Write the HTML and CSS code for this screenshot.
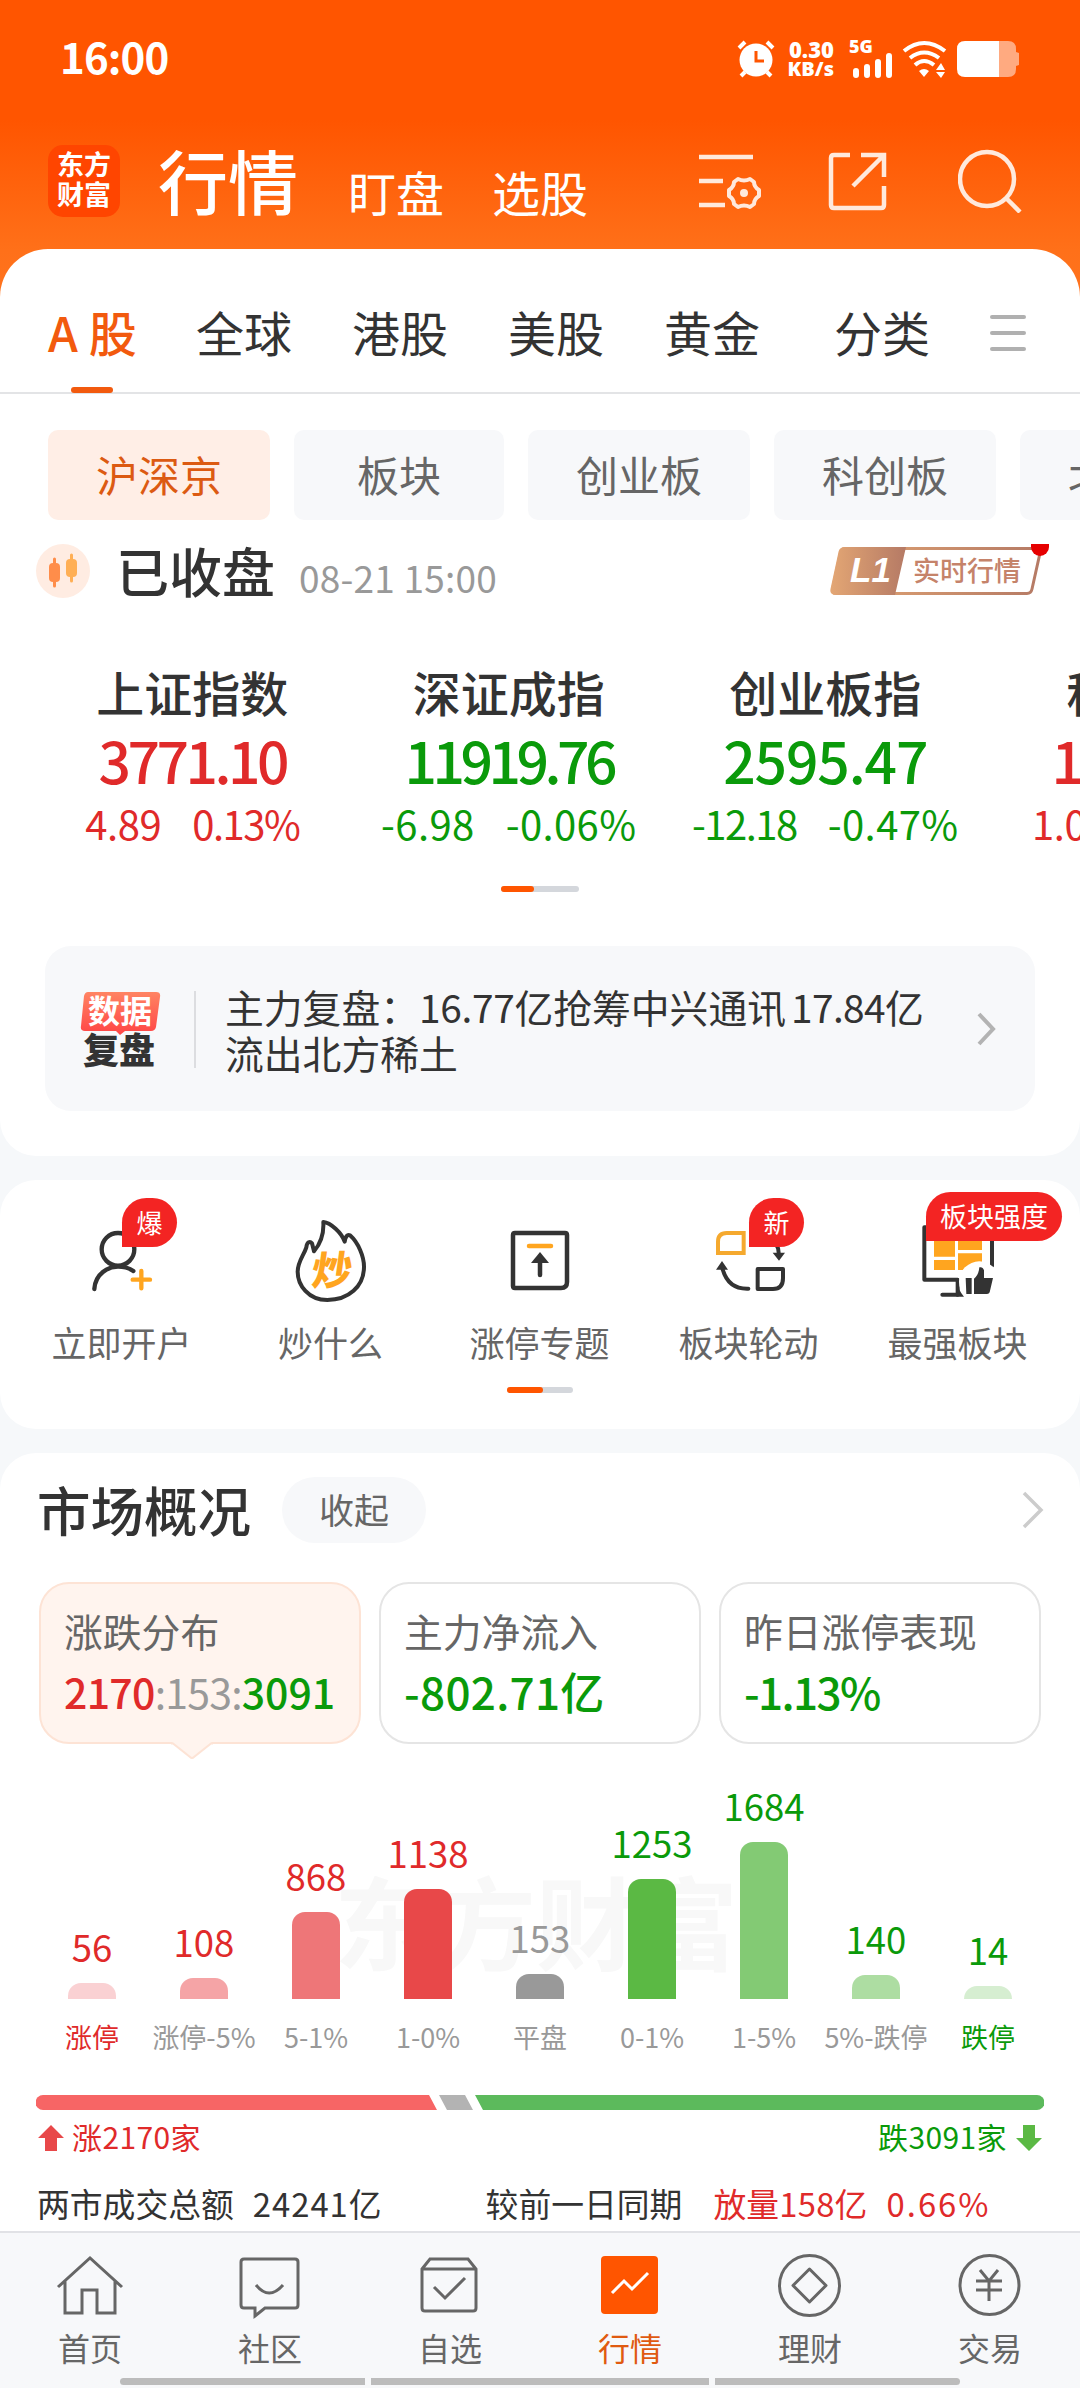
FILE: index.html
```html
<!DOCTYPE html>
<html lang="zh-CN">

<head>
    <meta charset="UTF-8">
    <meta name="viewport" content="width=device-width, initial-scale=1.0">
    <title>行情</title>
    <link rel="stylesheet" href="styles.css">
</head>

<body>
    <div class="status-bar">
        <span class="time">16:00</span>
        <div class="status-icons">
            <svg class="alarm" width="38" height="38" viewBox="0 0 38 38" fill="none" stroke="#fff">
                <circle cx="19" cy="20" r="16.5" fill="#fff" stroke="none"/>
                <path d="M2 8 L8 2 M30 2 L36 8 M8 32 L4 36 M30 32 L34 36" stroke-width="4"/>
                <path d="M19 11 V21 H27" stroke="#ff5500" stroke-width="3"/>
            </svg>
            <div class="speed"><b>0.30</b><b>KB/s</b></div>
            <div class="signal">
                <b>5G</b>
                <svg width="42" height="26" viewBox="0 0 42 26" stroke="#fff" stroke-width="6" stroke-linecap="round">
                    <path d="M5 19 V23 M16 15 V23 M27 10 V23 M38 4 V23"/>
                </svg>
            </div>
            <svg class="wifi" width="46" height="38" viewBox="0 0 46 38" fill="none" stroke="#fff" stroke-width="4">
                <path d="M2 11 Q22 -5 43 11"/>
                <path d="M8 18 Q22 7 37 18"/>
                <path d="M13 25 Q22 17 32 25"/>
                <path d="M17 31 Q22 27 27 31 L22 37 Z M34 30 L39 23 L43 30 Z M34 32 L39 38 L43 32 Z" fill="#fff" stroke="none"/>
            </svg>
            <svg class="battery" width="64" height="38" viewBox="0 0 64 38">
                <path d="M43 1 H52 Q60 1 60 9 V12 L63 13 V25 L60 26 V29 Q60 37 52 37 H43 Z" fill="#ffaa80"/>
                <path d="M43 1 H9 Q1 1 1 9 V29 Q1 37 9 37 H43 Z" fill="#fff"/>
            </svg>
        </div>
    </div>

    <header class="nav">
        <div class="logo"><span>东方</span><span>财富</span></div>
        <h1>行情</h1>
        <a class="nav-link">盯盘</a>
        <a class="nav-link">选股</a>
        <div class="nav-icons">
            <svg width="64" height="64" viewBox="0 0 64 64" fill="none" stroke="#ffe9dc" stroke-width="4.5">
                <path d="M1 8 H55 M1 32 H25 M1 56 H27"/>
                <path d="M40 30 Q46 33 52 30 L56 33 Q56 38 61 41 V47 Q56 50 56 55 L52 58 Q46 55 40 58 L36 55 Q36 50 31 47 V41 Q36 38 36 33 Z" stroke-width="4" stroke-linejoin="round"/>
                <circle cx="46" cy="44" r="4" fill="#ffe9dc" stroke="none"/>
            </svg>
            <svg width="64" height="64" viewBox="0 0 64 64" fill="none" stroke="#ffe9dc" stroke-width="4.5">
                <path d="M25 6 H9 Q6 6 6 9 V56 Q6 59 9 59 H56 Q59 59 59 56 V37"/>
                <path d="M36 6 H59 V28 M58 7 L28 37"/>
            </svg>
            <svg width="64" height="64" viewBox="0 0 64 64" fill="none" stroke="#ffe9dc" stroke-width="4.5">
                <circle cx="29" cy="30" r="27"/>
                <path d="M48 49 L62 63"/>
            </svg>
        </div>
    </header>

    <section class="panel quotes">
        <div class="tabs">
            <a class="active">A 股</a>
            <a>全球</a>
            <a>港股</a>
            <a>美股</a>
            <a>黄金</a>
            <a class="last">分类</a>
            <div class="menu"><i></i><i></i><i></i></div>
        </div>

        <div class="chips">
            <a class="active">沪深京</a>
            <a class="short">板块</a>
            <a>创业板</a>
            <a>科创板</a>
            <a>北交所</a>
        </div>

        <div class="market-status">
            <svg width="54" height="54" viewBox="0 0 54 54">
                <circle cx="27" cy="27" r="27" fill="#ffece2"/>
                <path d="M18.500 15 V42" stroke="#ff8d4a" stroke-width="3" stroke-linecap="round"/>
                <rect x="13" y="19" width="11" height="19" rx="4" fill="#ff8d4a"/>
                <path d="M35.500 11 V37" stroke="#ffaf55" stroke-width="3" stroke-linecap="round"/>
                <rect x="30" y="15" width="11" height="18" rx="4" fill="#ffaf55"/>
            </svg>
            <strong>已收盘</strong>
            <time>08-21 15:00</time>
            <svg class="level" width="222" height="54" viewBox="0 0 222 54">
                <defs>
                    <linearGradient id="gold" x1="0" x2="1" y1="0" y2="0">
                        <stop offset="0" stop-color="#e3a674"/>
                        <stop offset="1" stop-color="#b57a65"/>
                    </linearGradient>
                </defs>
                <path d="M15 4.500 H211 L202 45 Q201 49.500 197 49.500 H6 Q1 49.500 2 45 L10 8 Q11 4.500 15 4.500 Z" fill="#fff" stroke="url(#gold)" stroke-width="3"/>
                <path d="M15 3 H76 L65 51 H6 Q0 51 1 45 L9 8 Q10 3 15 3 Z" fill="url(#gold)"/>
                <text class="level-no" x="20" y="38">L1</text>
                <text class="level-text" x="83" y="37">实时行情</text>
                <path d="M201 0 H219 V3 A9 9 0 0 1 201 3 Z" fill="#e60000"/>
            </svg>
        </div>

        <div class="indexes">
            <div class="index up">
                <h3>上证指数</h3>
                <b class="mid">3771.10</b>
                <p><span>4.89</span><span class="mid">0.13%</span></p>
            </div>
            <div class="index down">
                <h3>深证成指</h3>
                <b class="tight">11919.76</b>
                <p><span class="loose">-6.98</span><span class="loose">-0.06%</span></p>
            </div>
            <div class="index down">
                <h3>创业板指</h3>
                <b>2595.47</b>
                <p><span class="mid">-12.18</span><span class="loose">-0.47%</span></p>
            </div>
            <div class="index up">
                <h3>科创50</h3>
                <b class="tight">1148.15</b>
                <p><span>1.08</span><span>0.09%</span></p>
            </div>
        </div>
        <div class="pager"><i></i></div>

        <div class="review">
            <svg width="84" height="78" viewBox="0 0 84 78">
                <defs>
                    <linearGradient id="coral" x1="0" x2="0" y1="0" y2="1">
                        <stop offset="0" stop-color="#ff8463"/>
                        <stop offset="1" stop-color="#ff4545"/>
                    </linearGradient>
                </defs>
                <path d="M9 2 H77 Q82 2 81 7 L77 37 Q76 41 72 41 H46 L41 45 L37 41 H6 Q1 41 2 36 L5 6 Q6 2 9 2 Z" fill="url(#coral)"/>
                <text class="review-top" x="9" y="33">数据</text>
                <text class="review-bottom" x="4" y="74">复盘</text>
            </svg>
            <p>主力复盘：<span>16.77</span>亿抢筹中兴通讯<span class="second">17.84</span>亿<br>流出北方稀土</p>
            <svg width="20" height="36" viewBox="0 0 20 36" fill="none" stroke="#b3b3b3" stroke-width="4">
                <path d="M2 3 L16 18 L2 33"/>
            </svg>
        </div>
    </section>

    <section class="panel tools">
        <div class="tool-list">
            <div class="tool">
                <svg width="90" height="90" viewBox="141 78 270 270" fill="none" stroke="#333" stroke-width="13" stroke-linecap="round">
                    <circle cx="264" cy="178" r="49"/>
                    <path d="M193 297 C196 250 235 230 264 230 Q292 230 310 243"/>
                    <path d="M308 269 H360 M334 243 V295" stroke="#ffa51f"/>
                </svg>
                <em class="badge">爆</em>
                <span>立即开户</span>
            </div>
            <div class="tool">
                <svg width="90" height="90" viewBox="768 78 270 270" fill="none" stroke="#333" stroke-width="12" stroke-linejoin="round">
                    <path d="M880 96 C902 98 935 128 944 155 C946 140 952 132 960 136 C985 158 1002 200 1002 230 C1002 290 955 330 892 330 C835 330 803 285 803 245 C803 215 822 195 829 172 C831 155 840 153 846 160 L852 184 C872 160 882 130 880 96 Z"/>
                    <text class="flame-text" transform="translate(840 284) skewX(-8)">炒</text>
                </svg>
                <span>炒什么</span>
            </div>
            <div class="tool">
                <svg width="90" height="90" viewBox="495 1216 90 90" fill="none" stroke="#333" stroke-width="4.500">
                    <path d="M515 1233 H565 Q567 1233 567 1235 V1282 Q567 1288 561 1288 H515 Q513 1288 513 1286 V1235 Q513 1233 515 1233 Z"/>
                    <path d="M529 1246 H551" stroke="#ffa51f" stroke-linecap="round"/>
                    <path d="M540 1275 V1260" stroke-linecap="round"/>
                    <path d="M540 1252 L549 1263 H531 Z" fill="#333" stroke="none"/>
                </svg>
                <span>涨停专题</span>
            </div>
            <div class="tool">
                <svg width="90" height="90" viewBox="72 108 270 270" fill="none" stroke="#333" stroke-width="12" stroke-linecap="round">
                    <path d="M140 159 H191 V219 H114 V185 Q114 159 140 159 Z" stroke="#f5a92e"/>
                    <path d="M233 267 H309 V295 Q309 327 279 327 H233 Z" stroke-linejoin="round"/>
                    <path d="M128 268 Q145 328 205 326 M287 190 Q296 205 296 218"/>
                    <path d="M126 243 L144 269 H108 Z M278 218 H315 L297 242 Z" fill="#333" stroke="none"/>
                </svg>
                <em class="badge">新</em>
                <span>板块轮动</span>
            </div>
            <div class="tool">
                <svg width="90" height="90" viewBox="696 108 270 270" fill="none" stroke="#333" stroke-width="12">
                    <path d="M933 258 V142 H730 V299 H830 V344 H784" stroke-linejoin="round" stroke-linecap="round"/>
                    <path d="M759 170 H822 V230 H759 Z M831 170 H903 V210 H831 Z M759 240 H822 V270 H759 Z M831 220 H903 V270 H831 Z" fill="#ffa51f" stroke="none"/>
                    <circle cx="895" cy="305" r="61" fill="#fff" stroke="none"/>
                    <path d="M854 294 H872 V342 H856 Z M879 342 V296 Q893 285 895 262 Q905 259 909 271 V294 H936 L926 337 Q924 342 918 342 Z" fill="#333" stroke="none"/>
                    <path d="M828 304 Q832 332 849 350 H826 Z" fill="#333" stroke="none"/>
                </svg>
                <em class="badge wide">板块强度</em>
                <span>最强板块</span>
            </div>
        </div>
        <div class="pager small"><i></i></div>
    </section>

    <section class="panel overview">
        <div class="overview-head">
            <h2>市场概况</h2>
            <a>收起</a>
            <svg width="24" height="40" viewBox="0 0 24 40" fill="none" stroke="#ccc" stroke-width="3.500">
                <path d="M3 3 L20 20 L3 37"/>
            </svg>
        </div>

        <div class="cards">
            <div class="card active">
                <span>涨跌分布</span>
                <b><i class="up">2170</i><i class="flat">:153:</i><i class="down">3091</i></b>
                <svg class="pointer" width="44" height="18" viewBox="0 0 44 18">
                    <path d="M2 0 H42 L24 15 Q22 17 20 15 Z" fill="#fff4ee"/>
                    <path d="M1 1.500 H3 L20 15 Q22 17 24 15 L41 1.500 H43" fill="none" stroke="#fde3d5" stroke-width="2"/>
                </svg>
            </div>
            <div class="card">
                <span>主力净流入</span>
                <b class="down">-802.71亿</b>
            </div>
            <div class="card">
                <span>昨日涨停表现</span>
                <b class="down percent">-1.13%</b>
            </div>
        </div>

        <div class="chart">
            <div class="watermark">东方财富</div>
            <div class="col up"><b>56</b><i style="height: 16px; background: #fad1d3"></i><span>涨停</span></div>
            <div class="col up"><b>108</b><i style="height: 21px; background: #f5a4a6"></i><span class="gray">涨停-5%</span></div>
            <div class="col up"><b>868</b><i style="height: 87px; background: #ee7678"></i><span class="gray">5-1%</span></div>
            <div class="col up"><b>1138</b><i style="height: 110px; background: #e84849"></i><span class="gray">1-0%</span></div>
            <div class="col flat"><b>153</b><i style="height: 25px; background: #999"></i><span>平盘</span></div>
            <div class="col down"><b>1253</b><i style="height: 120px; background: #5bb944"></i><span class="gray">0-1%</span></div>
            <div class="col down"><b>1684</b><i style="height: 157px; background: #83ca74"></i><span class="gray">1-5%</span></div>
            <div class="col down"><b>140</b><i style="height: 24px; background: #addda2"></i><span class="gray">5%-跌停</span></div>
            <div class="col down"><b>14</b><i style="height: 13px; background: #d6eed1"></i><span>跌停</span></div>
        </div>

        <svg class="ratio" width="1008" height="15" viewBox="0 0 1008 15">
            <path d="M7 0 H393 L401 15 H7 A7.500 7.500 0 0 1 7 0 Z" fill="#f76565"/>
            <path d="M403 0 H429 L437 15 H411 Z" fill="#b3b3b3"/>
            <path d="M439 0 H1001 A7.500 7.500 0 0 1 1001 15 H447 Z" fill="#5cba5c"/>
        </svg>
        <div class="ratio-text">
            <svg width="26" height="26" viewBox="0 0 26 26"><path d="M13 0 L26 13 H19 V26 H7 V13 H0 Z" fill="#e84849"/></svg>
            <span class="up">涨2170家</span>
            <span class="down">跌3091家</span>
            <svg width="26" height="26" viewBox="0 0 26 26"><path d="M13 26 L26 13 H19 V0 H7 V13 H0 Z" fill="#5bb944"/></svg>
        </div>

        <div class="totals">
            <span>两市成交总额</span>
            <span class="amount">24241亿</span>
            <span class="compare">较前一日同期</span>
            <span class="volume up">放量158亿</span>
            <span class="rate up">0.66%</span>
        </div>
    </section>

    <footer>
        <nav class="tab-bar">
            <a>
                <svg width="70" height="70" viewBox="0 0 70 70">
                    <path d="M3 37 L35 8 L67 37 M10 31 V63 H27 V40 H42 V63 H60 V31"/>
                </svg>
                <span>首页</span>
            </a>
            <a>
                <svg width="70" height="70" viewBox="0 0 70 70">
                    <path d="M9 9 H60 Q63 9 63 12 V55 Q63 58 60 58 H30 L20 66 V58 H9 Q6 58 6 55 V12 Q6 9 9 9 Z M21 35 Q34 51 48 35"/>
                </svg>
                <span>社区</span>
            </a>
            <a>
                <svg width="70" height="70" viewBox="0 0 70 70">
                    <path d="M7 19 L15 9 H53 L61 19 V58 Q61 61 58 61 H10 Q7 61 7 58 Z M7 19 H61 M19 37 L30 48 L50 28"/>
                </svg>
                <span>自选</span>
            </a>
            <a class="active">
                <svg width="70" height="70" viewBox="0 0 70 70">
                    <rect x="6" y="6" width="57" height="58" rx="4" fill="#ff5500" stroke="none"/>
                    <path d="M17 43 L29 31 L37 39 L53 23" stroke="#fff"/>
                </svg>
                <span>行情</span>
            </a>
            <a>
                <svg width="70" height="70" viewBox="0 0 70 70">
                    <circle cx="34.500" cy="35.500" r="30"/>
                    <path d="M34.500 19 L51 35.500 L34.500 52 L18 35.500 Z" stroke-linejoin="round"/>
                </svg>
                <span>理财</span>
            </a>
            <a>
                <svg width="70" height="70" viewBox="0 0 70 70">
                    <circle cx="34.500" cy="35" r="29.500"/>
                    <path d="M25 20 L34 31 L43 20 M34 31 V51 M21 31 H47 M21 40 H47"/>
                </svg>
                <span>交易</span>
            </a>
        </nav>
        <div class="home-bar"><i></i><i class="center"></i><i></i></div>
    </footer>
</body>

</html>
```
FILE: styles.css
```css
* {
    margin: 0;
    padding: 0;
    box-sizing: border-box;
}

body {
    width: 1080px;
    height: 2388px;
    overflow: hidden;
    display: flex;
    flex-direction: column;
    font-family: "Noto Sans CJK SC", sans-serif;
    color: #333;
    background: #f6f8fa linear-gradient(#ff5500 0, #ff5500 120px, #ff7019 250px, #ff7420 310px) no-repeat;
    background-size: 1080px 310px;
}

svg {
    display: block;
    flex: none;
}

i,
em {
    font-style: normal;
}

.up {
    color: #e02a2a;
}

.down {
    color: #0a9a0a;
}

.flat,
.gray {
    color: #999;
}

/* status bar */
.status-bar {
    height: 118px;
    flex: none;
    padding: 0 60px;
    display: flex;
    align-items: center;
    justify-content: space-between;
    color: #fff;
}

.time {
    font-size: 42px;
    line-height: 50px;
    font-weight: 700;
    letter-spacing: -0.9px;
    margin-top: -6px;
}

.status-icons {
    display: flex;
    align-items: center;
}

.speed {
    width: 46px;
    margin-left: 13px;
    margin-right: 1px;
    display: flex;
    flex-direction: column;
    align-items: flex-end;
    font: bold 22px/20px "Noto Sans", sans-serif;
}

.speed b + b {
    font-size: 20px;
}

.signal {
    width: 42px;
    height: 38px;
    margin-left: 16px;
    margin-right: 1px;
    font: bold 18px/12px "Noto Sans", sans-serif;
}

.signal b {
    margin-left: -2px;
}

.wifi {
    margin-left: 8px;
}

.battery {
    margin-left: 8px;
}

/* nav */
.nav {
    height: 131px;
    flex: none;
    padding: 0 58px 0 48px;
    display: flex;
    align-items: center;
    color: #fff;
}

.logo {
    width: 72px;
    height: 72px;
    margin-top: -6px;
    border-radius: 15px;
    background: #ff4500;
    display: flex;
    flex-direction: column;
    align-items: center;
    padding-top: 4px;
    font: 700 27px/30px "Noto Sans CJK SC", sans-serif;
}

.nav h1 {
    font-size: 70px;
    line-height: 80px;
    font-weight: 500;
    margin: -8px 0 0 38px;
}

.nav-link {
    font-size: 48px;
    line-height: 56px;
    margin: 14px 0 0 50px;
}

.nav-link + .nav-link {
    margin-left: 48px;
}

.nav-icons {
    display: flex;
    gap: 66px;
    margin: -6px 0 0 auto;
}

.nav-icons svg:nth-child(2) {
    margin: 0 3px 0 -3px;
}

/* white blocks */
.panel {
    flex: none;
    background: #fff;
    border-radius: 36px;
    margin-bottom: 24px;
}

.quotes {
    height: 907px;
    border-radius: 48px 48px 36px 36px;
    overflow: hidden;
}

.tabs {
    height: 145px;
    padding: 0 54px 0 48px;
    display: flex;
    gap: 60px;
    border-bottom: 2px solid #e3e4e6;
    font-size: 48px;
    line-height: 165px;
    white-space: nowrap;
}

.tabs a {
    flex: none;
    width: 96px;
    height: 143px;
}

.tabs .active {
    width: 88px;
    color: #f25a0e;
    font-weight: 500;
    position: relative;
}

.tabs .active::after {
    content: "";
    position: absolute;
    left: 23px;
    bottom: -1px;
    width: 42px;
    height: 6px;
    border-radius: 3px;
    background: #f25a0e;
}

.tabs .last {
    margin-left: 14px;
}

.menu {
    width: 37px;
    margin: 66px 0 0 auto;
    display: flex;
    flex-direction: column;
    gap: 12px;
}

.menu i {
    height: 4px;
    border-radius: 2px;
    background: #b0b0b0;
}

.chips {
    display: flex;
    gap: 24px;
    padding: 36px 0 0 48px;
    font-size: 42px;
    line-height: 87px;
    text-align: center;
    color: #666;
}

.chips a {
    flex: none;
    width: 222px;
    height: 90px;
    border-radius: 10px;
    background: #f7f8fa;
}

.chips .short {
    width: 210px;
}

.chips .active {
    color: #dc5a12;
    background: #ffeee6;
}

.market-status {
    height: 54px;
    margin-top: 24px;
    padding: 0 28px 0 36px;
    display: flex;
    align-items: center;
}

.market-status strong {
    font-size: 53px;
    line-height: 54px;
    font-weight: 500;
    margin: -2px 0 0 26px;
}

.market-status time {
    font-size: 37px;
    line-height: 54px;
    letter-spacing: 0.2px;
    color: #999;
    margin: 11px 0 0 24px;
}

.level {
    margin-left: auto;
}

.level-no {
    font: italic bold 35px "Liberation Sans", sans-serif;
    fill: #fff;
}

.level-text {
    font-size: 27px;
    font-weight: 500;
    fill: #c5836a;
}

.indexes {
    display: flex;
    padding: 61px 0 0 34px;
}

.index {
    width: 316.500px;
    flex: none;
    display: flex;
    flex-direction: column;
    align-items: center;
}

.index h3 {
    font-size: 48px;
    line-height: 64px;
    font-weight: 500;
    color: #333;
}

.index b {
    font-size: 57px;
    line-height: 72px;
    font-weight: 500;
    letter-spacing: -1.100px;
}

.index b.tight {
    letter-spacing: -4.500px;
}

.index b.mid {
    letter-spacing: -3.500px;
}

.index p {
    display: flex;
    gap: 31px;
    font-size: 40px;
    line-height: 56px;
    letter-spacing: -0.4px;
}

.index p .mid {
    letter-spacing: -1.500px;
}

.index p .loose {
    letter-spacing: 0.4px;
}

.pager {
    width: 78px;
    height: 6px;
    margin: 35px auto 0;
    border-radius: 3px;
    background: #d4d7dc;
}

.pager i {
    display: block;
    width: 33px;
    height: 6px;
    border-radius: 3px;
    background: #ff5500;
}

.review {
    height: 165px;
    margin: 54px 45px 0;
    padding: 0 38px 0 34px;
    border-radius: 26px;
    background: #f7f8fa;
    display: flex;
    align-items: center;
}

.review p {
    flex: 1;
    display: block;
    margin-left: 62px;
    font-size: 38.800px;
    line-height: 46px;
    white-space: nowrap;
    position: relative;
}

.review p::before {
    content: "";
    position: absolute;
    left: -31px;
    top: 8px;
    width: 2px;
    height: 77px;
    background: #dcdde0;
}

.review p span {
    letter-spacing: -0.3px;
}

.review p .second {
    margin-left: 5px;
    letter-spacing: -0.6px;
}

.review-top {
    font-size: 32px;
    font-weight: 700;
    fill: #fff;
}

.review-bottom {
    font-size: 36px;
    font-weight: 900;
    fill: #333;
}

/* shortcuts */
.tools {
    height: 249px;
    padding: 36px 17px 0;
}

.tool-list {
    display: flex;
}

.tool {
    width: 209px;
    position: relative;
    display: flex;
    flex-direction: column;
    align-items: center;
    font-size: 35px;
    line-height: 40px;
    color: #666;
}

.tool > span {
    margin-top: 16px;
}

.badge {
    position: absolute;
    left: 105px;
    top: -18px;
    width: 55px;
    height: 49px;
    border-radius: 25px 25px 25px 0;
    background: #f32423;
    color: #fff;
    font-size: 26px;
    line-height: 47px;
    text-align: center;
}

.badge.wide {
    left: 73px;
    top: -24px;
    width: 136px;
    font-size: 27px;
}

.flame-text {
    font-size: 120px;
    font-weight: 900;
    fill: #ffa51f;
    stroke: none;
}

.pager.small {
    width: 66px;
    margin-top: 25px;
}

.pager.small i {
    width: 36px;
}

/* overview */
.overview {
    height: 778px;
    margin-bottom: 0;
    border-radius: 36px 36px 0 0;
}

.overview-head {
    height: 90px;
    padding: 24px 35px 0 37px;
    display: flex;
    align-items: center;
}

.overview-head h2 {
    font-size: 53.500px;
    line-height: 66px;
    font-weight: 500;
    margin-top: -3px;
}

.overview-head a {
    width: 144px;
    height: 66px;
    margin-left: 31px;
    border-radius: 33px;
    background: #f7f8fa;
    font-size: 35px;
    line-height: 63px;
    text-align: center;
    color: #666;
}

.overview-head svg {
    margin-left: auto;
}

.cards {
    display: flex;
    gap: 18px;
    padding: 39px 39px 0;
}

.card {
    position: relative;
    width: 322px;
    height: 162px;
    padding: 18px 0 0 23px;
    border: 2px solid #e5e5e5;
    border-radius: 30px;
    display: flex;
    flex-direction: column;
    font-size: 38.800px;
    line-height: 56px;
    color: #666;
}

.card b {
    font-size: 44px;
    line-height: 60px;
    margin-top: 3px;
    font-weight: 500;
    letter-spacing: 0.3px;
}

.card .percent {
    letter-spacing: -1.600px;
}

.card.active {
    background: #fff4ee;
    border-color: #fde3d5;
}

.card.active b {
    font-size: 41px;
    letter-spacing: -0.7px;
}

.card.active .flat {
    font-weight: 400;
    letter-spacing: -0.8px;
}

.card.active .down {
    letter-spacing: 0;
}

.pointer {
    position: absolute;
    left: 129px;
    top: 158px;
}

.chart {
    position: relative;
    height: 317px;
    padding: 0 36px;
    display: flex;
    align-items: flex-end;
}

.watermark {
    position: absolute;
    left: 334px;
    top: 115px;
    font-size: 101px;
    line-height: 120px;
    font-weight: 700;
    color: #f8f8f8;
}

.col {
    position: relative;
    width: 112px;
    display: flex;
    flex-direction: column;
    align-items: center;
}

.col b {
    font-size: 36.500px;
    line-height: 40px;
    font-weight: 400;
    margin-bottom: 16px;
}

.col i {
    width: 48px;
    border-radius: 13px 13px 0 0;
}

.col span {
    height: 62px;
    font-size: 27px;
    line-height: 76px;
    white-space: nowrap;
}

.ratio {
    margin: 34px 0 0 36px;
}

.ratio-text {
    height: 56px;
    padding: 0 38px;
    display: flex;
    align-items: center;
    font-size: 30px;
    line-height: 40px;
    letter-spacing: 0.4px;
}

.ratio-text span {
    margin: -4px 0 0 8px;
}

.ratio-text .down {
    margin: -4px 9px 0 auto;
}

.totals {
    height: 64px;
    padding-left: 37px;
    display: flex;
    font-size: 32.800px;
    line-height: 74px;
    white-space: nowrap;
}

.amount {
    margin-left: 19px;
    letter-spacing: 1px;
}

.compare {
    margin-left: 103px;
}

.volume {
    margin-left: 31px;
    letter-spacing: 0.2px;
}

.rate {
    margin-left: 19px;
    letter-spacing: 2px;
}

/* bottom tabs */
footer {
    height: 157px;
    flex: none;
    border-top: 2px solid #e1e2e6;
    background: #f7f8fa;
}

.tab-bar {
    height: 145px;
    display: flex;
}

.tab-bar a {
    width: 180px;
    padding-top: 17px;
    display: flex;
    flex-direction: column;
    align-items: center;
    font-size: 32px;
    line-height: 40px;
    color: #666;
}

.tab-bar svg {
    fill: none;
    stroke: #666;
    stroke-width: 3px;
}

.tab-bar span {
    margin-top: 7px;
}

.tab-bar .active {
    color: #e05a10;
}

.home-bar {
    display: flex;
    justify-content: center;
    gap: 6px;
}

.home-bar i {
    width: 245px;
    height: 7px;
    background: #bcbcbc;
    border-radius: 4px 0 0 4px;
}

.home-bar i:last-child {
    border-radius: 0 4px 4px 0;
}

.home-bar .center {
    width: 338px;
    border-radius: 0;
}
```
